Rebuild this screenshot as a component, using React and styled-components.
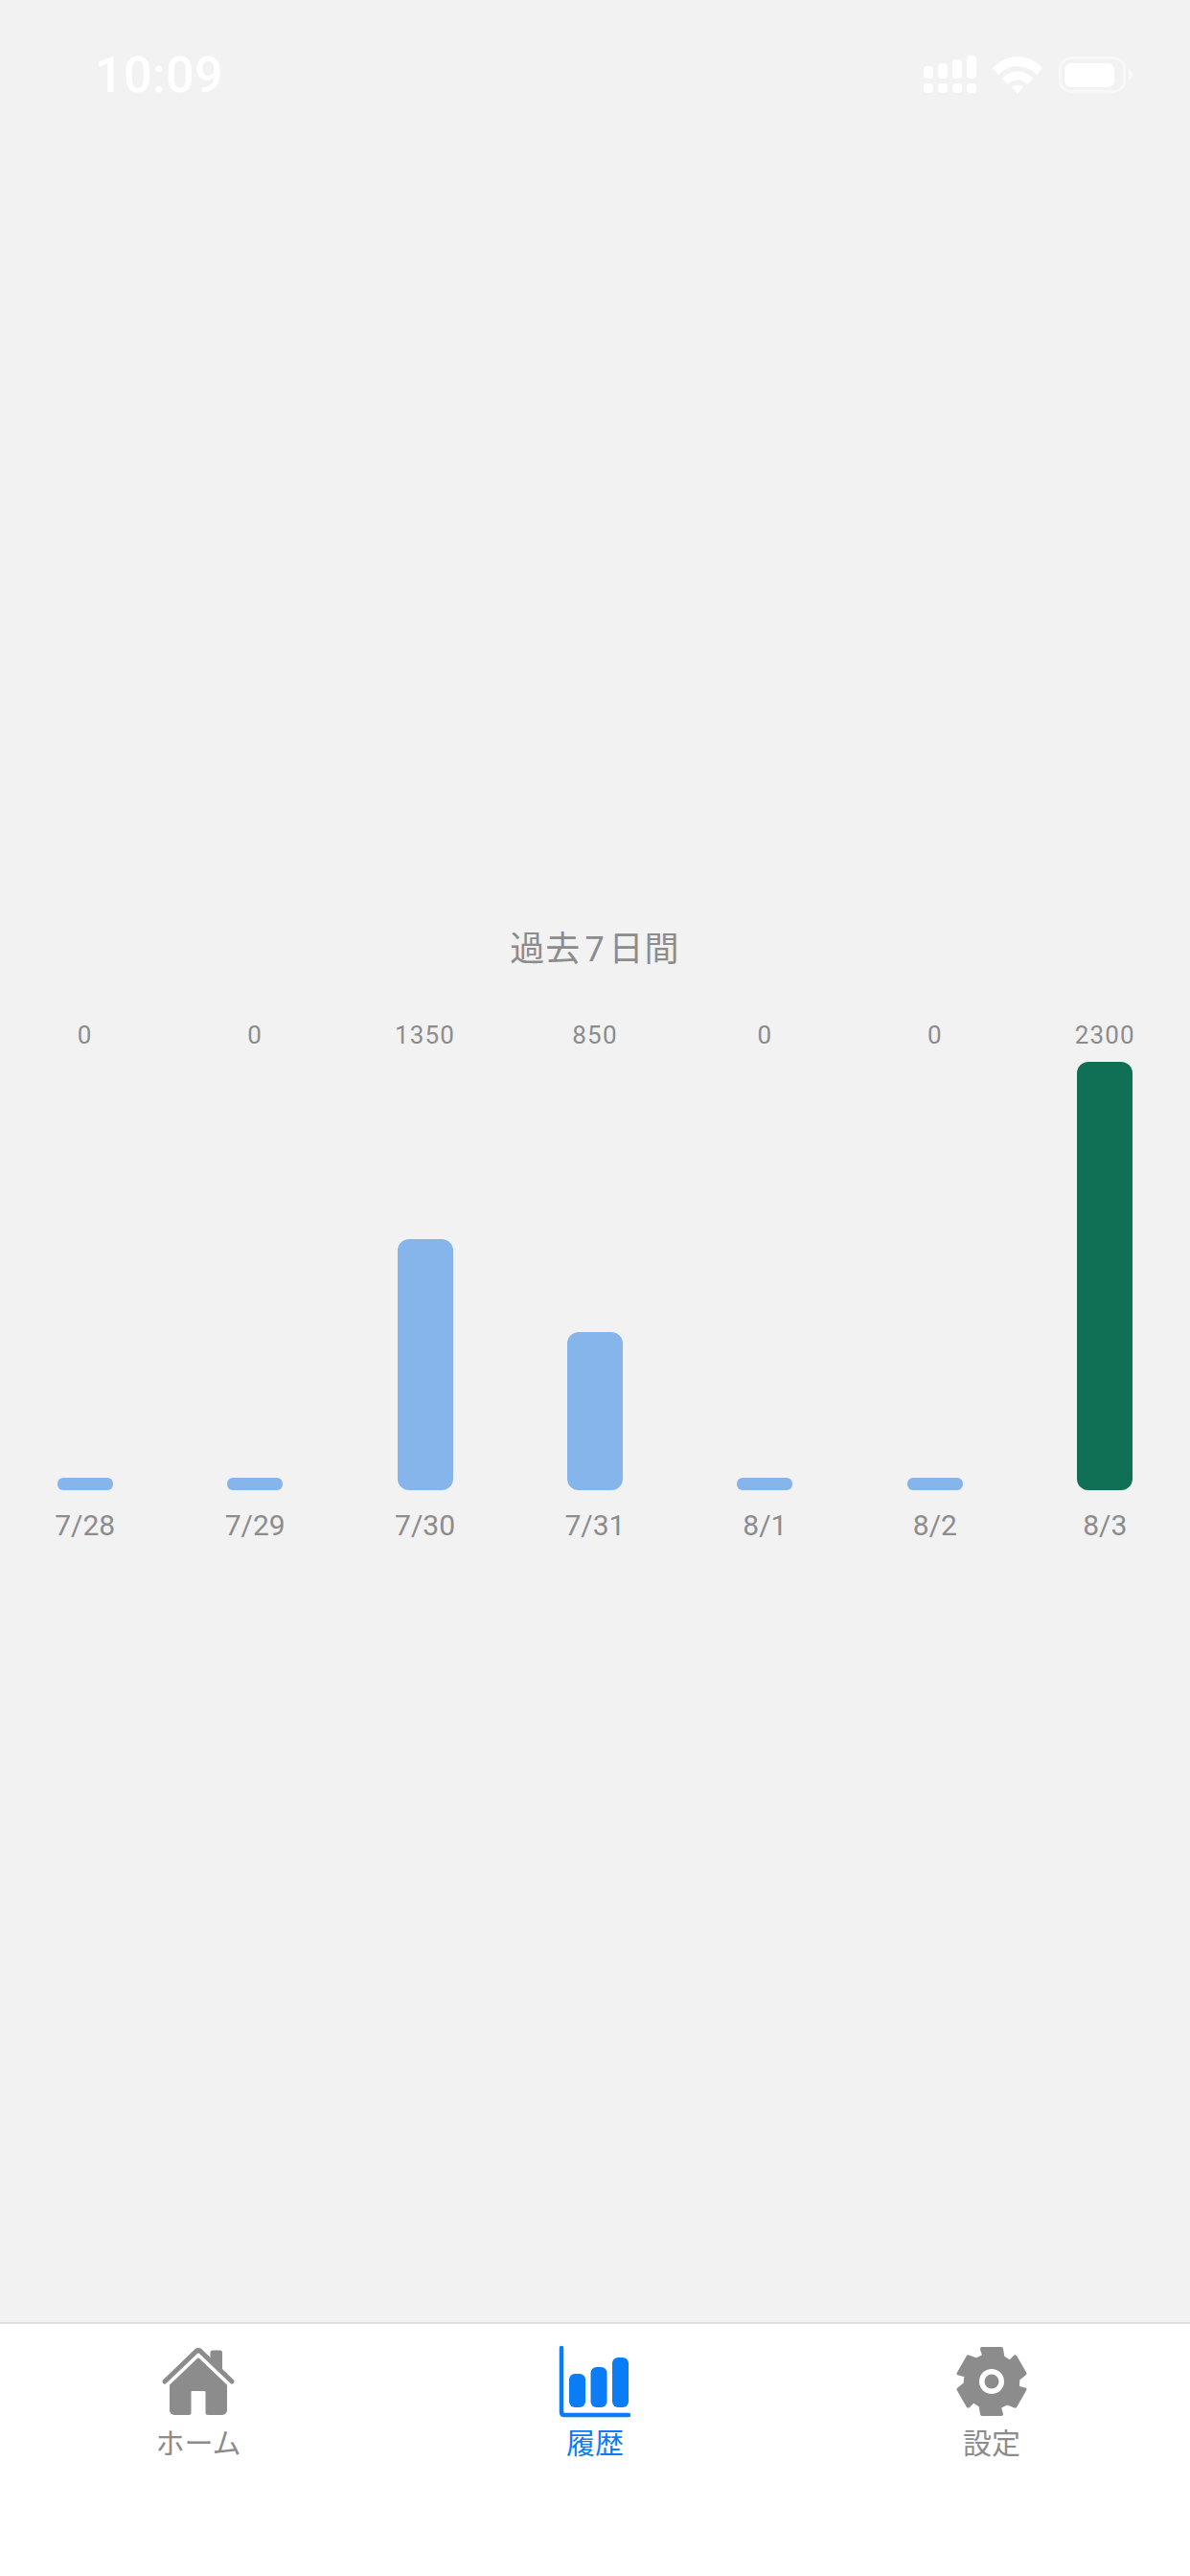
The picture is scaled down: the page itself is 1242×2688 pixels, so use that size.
import React from 'react';
import styled, {createGlobalStyle} from 'styled-components';
import {IoHome} from 'react-icons/io5';

const GRAY = '#8c8c8d';
const BLUE = '#0a7cf6';
const FONT = `Roboto, "Noto Sans CJK JP", sans-serif`;

const days = [
  {date: '7/28', value: 0},
  {date: '7/29', value: 0},
  {date: '7/30', value: 1350},
  {date: '7/31', value: 850},
  {date: '8/1', value: 0},
  {date: '8/2', value: 0},
  {date: '8/3', value: 2300, today: true},
];

const MAX_VALUE = 2300;
const PLOT_HEIGHT = 447;
const MIN_BAR = 13;

const GlobalStyle = createGlobalStyle`
  html, body {
    margin: 0;
    padding: 0;
    background: #f2f2f2;
  }
`;

const Screen = styled.div`
  width: 1242px;
  height: 2688px;
  display: flex;
  flex-direction: column;
  background: #f2f2f2;
  font-family: ${FONT};
  overflow: hidden;
`;

const StatusBar = styled.div`
  height: 132px;
  padding: 50px 59px 0 99px;
  box-sizing: border-box;
  display: flex;
  justify-content: space-between;
  align-items: flex-start;
`;

const Clock = styled.div`
  font-size: 52px;
  line-height: 58px;
  font-weight: 500;
  letter-spacing: 0.4px;
  color: #fff;
`;

const StatusIcons = styled.div`
  display: flex;
  align-items: center;
  gap: 17px;
  margin-top: 8px;
`;

const Main = styled.main`
  flex: 1;
  padding-top: 835px;
`;

const ChartTitle = styled.h2`
  margin: 0;
  text-align: center;
  font-size: 36px;
  line-height: 48px;
  font-weight: 400;
  letter-spacing: 1px;
  color: ${GRAY};
`;

const TitleDigit = styled.span`
  margin: 0 4px;
`;

const Chart = styled.div`
  margin-top: 50px;
  display: grid;
  grid-template-columns: repeat(7, 1fr);
`;

const Column = styled.div`
  display: flex;
  flex-direction: column;
  align-items: center;
`;

const Value = styled.div`
  font-size: 26px;
  line-height: 30px;
  letter-spacing: 1.2px;
  font-weight: 400;
  color: ${GRAY};
`;

const Plot = styled.div`
  height: ${PLOT_HEIGHT}px;
  margin-top: 13px;
  display: flex;
  align-items: flex-end;
`;

const Bar = styled.div`
  width: 58px;
  border-radius: ${({$short}) => ($short ? '6px' : '12px')};
  background: ${({$today}) => ($today ? '#0f7056' : '#85b5ea')};
`;

const DateLabel = styled.div`
  margin-top: 19px;
  font-size: 30px;
  line-height: 36px;
  font-weight: 400;
  color: ${GRAY};
`;

const TabBar = styled.nav`
  height: 265px;
  box-sizing: border-box;
  border-top: 2px solid #dfdfdf;
  background: #fff;
  display: grid;
  grid-template-columns: repeat(3, 1fr);
`;

const Tab = styled.div`
  display: flex;
  flex-direction: column;
  align-items: center;
  padding-top: 20px;
  color: ${({$active}) => ($active ? BLUE : GRAY)};
`;

const TabIcon = styled.div`
  height: 80px;
  display: flex;
  align-items: center;
  justify-content: center;
`;

const TabLabel = styled.div`
  margin-top: 7px;
  font-size: 30px;
  line-height: 36px;
  font-weight: 400;
`;

const SignalIcon = () => (
  <svg width="55" height="40" viewBox="0 0 55 40" fill="#fff">
    <rect x="0" y="11" width="10" height="13" rx="4" />
    <rect x="15" y="8" width="10" height="16" rx="4" />
    <rect x="30" y="4" width="10" height="20" rx="4" />
    <rect x="45" y="0" width="10" height="24" rx="4" />
    <rect x="0" y="29" width="10" height="10" rx="4" />
    <rect x="15" y="29" width="10" height="10" rx="4" />
    <rect x="30" y="29" width="10" height="10" rx="4" />
    <rect x="45" y="29" width="10" height="10" rx="4" />
  </svg>
);

const WifiIcon = () => (
  <svg width="52" height="39" viewBox="0 0 52 39" fill="#fff">
    <path d="M0 12 C15 -4 37 -4 52 12 L46 19 C34 7 18 7 6 19 Z" />
    <path d="M10 23 C19 13 33 13 42 23 L36 29 C30 23 22 23 16 29 Z" />
    <path d="M20 32 C23 29 29 29 32 32 L26 39 Z" />
  </svg>
);

const BatteryIcon = () => (
  <svg width="78" height="38" viewBox="0 0 78 38" fill="none">
    <rect x="1.5" y="1.5" width="67" height="35" rx="11" stroke="#fff" strokeOpacity="0.45" strokeWidth="3" />
    <rect x="6" y="7" width="52" height="25" rx="7" fill="#fff" />
    <path d="M73 13 C76 15 78 17 78 19 C78 21 76 23 73 25 Z" fill="#fff" fillOpacity="0.5" />
  </svg>
);

const ChartIcon = () => (
  <svg width="76" height="76" viewBox="0 0 76 76" fill="currentColor">
    <path d="M3 3 V70 Q3 73 6 73 H73" fill="none" stroke="currentColor" strokeWidth="4.5" strokeLinecap="round" />
    <rect x="11" y="30" width="17" height="35" rx="6" />
    <rect x="33.5" y="23" width="17" height="42" rx="6" />
    <rect x="56" y="13" width="17" height="52" rx="6" />
  </svg>
);

// six teeth, the rounded stroke softens the corners
const gearPoints = () => {
  const base = [[-10, -34], [10, -34], [11.5, -25], [19, -20]];
  const points = [];
  for (let i = 0; i < 6; i++) {
    const a = (i * Math.PI) / 3;
    base.forEach(([x, y]) => {
      points.push(`${x * Math.cos(a) - y * Math.sin(a)},${x * Math.sin(a) + y * Math.cos(a)}`);
    });
  }
  return points.join(' ');
};

const GearIcon = () => (
  <svg width="76" height="76" viewBox="-38 -38 76 76" fill="currentColor">
    <polygon points={gearPoints()} stroke="currentColor" strokeWidth="4" strokeLinejoin="round" />
    <circle r="13" fill="#fff" />
    <circle r="7.5" />
  </svg>
);

const App = () => (
  <Screen>
    <GlobalStyle />
    <StatusBar>
      <Clock>10:09</Clock>
      <StatusIcons>
        <SignalIcon />
        <WifiIcon />
        <BatteryIcon />
      </StatusIcons>
    </StatusBar>
    <Main>
      <ChartTitle>過去<TitleDigit>7</TitleDigit>日間</ChartTitle>
      <Chart>
        {days.map(({date, value, today}) => {
          const height = Math.max(MIN_BAR, (value / MAX_VALUE) * PLOT_HEIGHT);
          return (
            <Column key={date}>
              <Value>{value}</Value>
              <Plot>
                <Bar $today={today} $short={value === 0} style={{height}} />
              </Plot>
              <DateLabel>{date}</DateLabel>
            </Column>
          );
        })}
      </Chart>
    </Main>
    <TabBar>
      <Tab>
        <TabIcon><IoHome size={80} /></TabIcon>
        <TabLabel>ホーム</TabLabel>
      </Tab>
      <Tab $active>
        <TabIcon><ChartIcon /></TabIcon>
        <TabLabel>履歴</TabLabel>
      </Tab>
      <Tab>
        <TabIcon><GearIcon /></TabIcon>
        <TabLabel>設定</TabLabel>
      </Tab>
    </TabBar>
  </Screen>
);

export default App;
